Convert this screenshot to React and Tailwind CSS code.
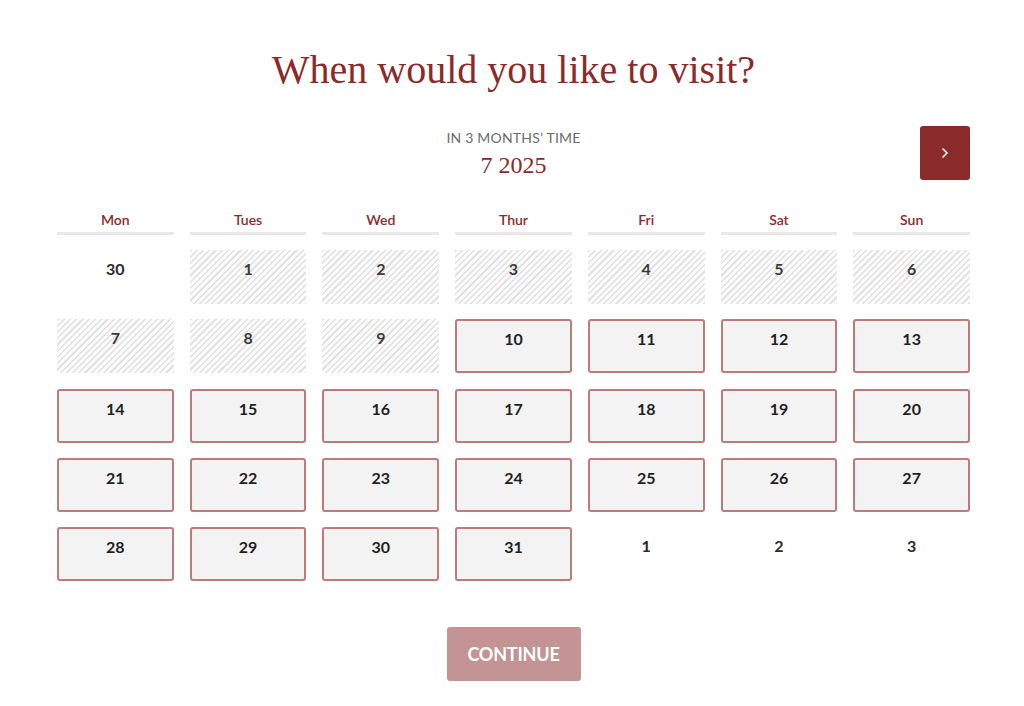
import { ChevronRight } from "lucide-react";

const DAYS = ["Mon", "Tues", "Wed", "Thur", "Fri", "Sat", "Sun"];

// kind: "out" = other month, "off" = unavailable (hatched), "on" = selectable
const CELLS = [
  { n: 30, kind: "out" },
  ...[1, 2, 3, 4, 5, 6, 7, 8, 9].map((n) => ({ n, kind: "off" })),
  ...Array.from({ length: 22 }, (_, i) => ({ n: i + 10, kind: "on" })),
  { n: 1, kind: "out" },
  { n: 2, kind: "out" },
  { n: 3, kind: "out" },
];

const serif = "font-['Liberation_Serif','Times_New_Roman',serif]";
const sans = "font-['Lato','Open_Sans',sans-serif]";

function DayCell({ n, kind }) {
  if (kind === "on") {
    return (
      <button className="h-[54px] rounded-[3px] border-2 border-[#c07a7a] bg-[#f3f3f3] text-[16px] font-bold text-[#1f1f1f] flex items-center justify-center pb-[14px]">
        {n}
      </button>
    );
  }
  if (kind === "off") {
    return (
      <div className="h-[54px] bg-[repeating-linear-gradient(135deg,#e2e2e2_0px,#e2e2e2_1.6px,#fbfbfb_1.6px,#fbfbfb_4.4px)] text-[16px] font-bold text-[#3a3a3a] flex items-center justify-center pb-[16px]">
        {n}
      </div>
    );
  }
  return (
    <div className="h-[54px] text-[16px] font-bold text-[#2a2a2a] flex items-center justify-center pb-[16px]">
      {n}
    </div>
  );
}

export default function App() {
  return (
    <div className={`w-[1024px] h-[706px] bg-white ${sans}`}>
      <div className="pl-[57px] pr-[54px] pt-[46px]">
        <h1 className={`${serif} text-center text-[40px] leading-[48px] text-[#8b2a2a]`}>
          When would you like to visit?
        </h1>

        <div className="relative mt-[32px] h-[62px] flex flex-col items-center">
          <p className="text-[14px] leading-[18px] text-[#6b6b6b] tracking-[0.2px] mt-[3px]">
            IN 3 MONTHS&#8217; TIME
          </p>
          <p className={`${serif} text-[24px] leading-[28px] text-[#8b2a2a] mt-[4px]`}>
            7 2025
          </p>
          <button className="absolute right-0 top-0 w-[50px] h-[54px] rounded-[3px] bg-[#8b2a2a] flex items-center justify-center text-white">
            <ChevronRight size={16} strokeWidth={2.5} />
          </button>
        </div>

        <div className="mt-[20px] grid grid-cols-7 gap-x-[16px]">
          {DAYS.map((d) => (
            <div key={d} className="border-b-[3px] border-[#e8e8e8] pt-[2px] pb-[2px] text-center text-[14px] leading-[20px] font-semibold text-[#8b2a2a]">
              {d}
            </div>
          ))}
        </div>

        <div className="mt-[15px] grid grid-cols-7 gap-x-[16px] gap-y-[15.3px]">
          {CELLS.map((c, i) => (
            <DayCell key={i} n={c.n} kind={c.kind} />
          ))}
        </div>

        <div className="mt-[46px] flex justify-center">
          <button className="w-[134px] h-[54px] rounded-[3px] bg-[#c49393] text-white text-[18px] font-bold tracking-[-0.2px]">
            CONTINUE
          </button>
        </div>
      </div>
    </div>
  );
}
